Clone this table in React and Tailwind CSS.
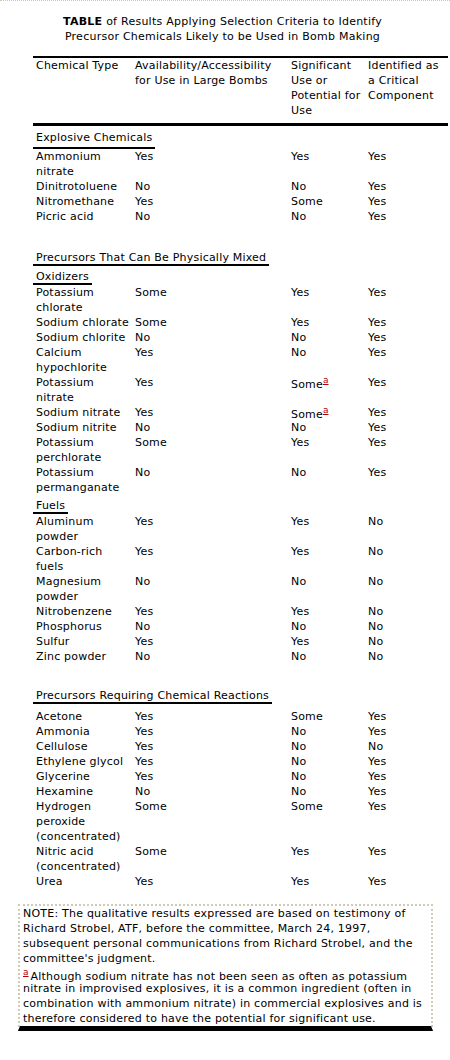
import React from "react";

const explosive = [
  [["Ammonium", "nitrate"], "Yes", "Yes", "Yes"],
  [["Dinitrotoluene"], "No", "No", "Yes"],
  [["Nitromethane"], "Yes", "Some", "Yes"],
  [["Picric acid"], "No", "No", "Yes"],
];

const oxidizers = [
  [["Potassium", "chlorate"], "Some", "Yes", "Yes"],
  [["Sodium chlorate"], "Some", "Yes", "Yes"],
  [["Sodium chlorite"], "No", "No", "Yes"],
  [["Calcium", "hypochlorite"], "Yes", "No", "Yes"],
  [["Potassium", "nitrate"], "Yes", "Some*", "Yes"],
  [["Sodium nitrate"], "Yes", "Some*", "Yes"],
  [["Sodium nitrite"], "No", "No", "Yes"],
  [["Potassium", "perchlorate"], "Some", "Yes", "Yes"],
  [["Potassium", "permanganate"], "No", "No", "Yes"],
];

const fuels = [
  [["Aluminum", "powder"], "Yes", "Yes", "No"],
  [["Carbon-rich", "fuels"], "Yes", "Yes", "No"],
  [["Magnesium", "powder"], "No", "No", "No"],
  [["Nitrobenzene"], "Yes", "Yes", "No"],
  [["Phosphorus"], "No", "No", "No"],
  [["Sulfur"], "Yes", "Yes", "No"],
  [["Zinc powder"], "No", "No", "No"],
];

const reactions = [
  [["Acetone"], "Yes", "Some", "Yes"],
  [["Ammonia"], "Yes", "No", "Yes"],
  [["Cellulose"], "Yes", "No", "No"],
  [["Ethylene glycol"], "Yes", "No", "Yes"],
  [["Glycerine"], "Yes", "No", "Yes"],
  [["Hexamine"], "No", "No", "Yes"],
  [["Hydrogen", "peroxide", "(concentrated)"], "Some", "Some", "Yes"],
  [["Nitric acid", "(concentrated)"], "Some", "Yes", "Yes"],
  [["Urea"], "Yes", "Yes", "Yes"],
];

const grid = "grid grid-cols-[99px_156px_77px_83px]";

function Sup() {
  return (
    <span className="relative -top-[5px] text-[9px] leading-none tracking-normal text-[#b00000] underline">
      a
    </span>
  );
}

function Cell({ value }) {
  if (value === "Some*") {
    return (
      <div className="pl-[3px]">
        <span className="relative top-[2px] whitespace-nowrap">
          Some
          <Sup />
        </span>
      </div>
    );
  }
  return <div className="pl-[3px] whitespace-nowrap">{value}</div>;
}

function Rows({ rows }) {
  return (
    <div>
      {rows.map((r, i) => (
        <div key={i} className={grid}>
          <div className="pl-[3px] whitespace-nowrap">
            {r[0].map((l, j) => (
              <div key={j}>{l}</div>
            ))}
          </div>
          <Cell value={r[1]} />
          <Cell value={r[2]} />
          <Cell value={r[3]} />
        </div>
      ))}
    </div>
  );
}

function SubHead({ children, className = "" }) {
  return (
    <div
      className={`w-fit pl-[3px] pr-[3px] leading-[12px] border-b-2 border-black whitespace-nowrap ${className}`}
    >
      {children}
    </div>
  );
}

export default function App() {
  return (
    <div
      className="w-[450px] h-[1060px] bg-white text-black text-[11px] leading-[15px] border-t border-dotted border-[#cfc8a8] overflow-hidden"
      style={{ fontFamily: '"DejaVu Sans", Verdana, sans-serif' }}
    >
      <div className="pt-[13px] pr-[5px] text-center tracking-[0.25px]">
        <div>
          <span className="font-bold">TABLE</span> of Results Applying Selection Criteria to Identify
        </div>
        <div>Precursor Chemicals Likely to be Used in Bomb Making</div>
      </div>

      <div className="ml-[33px] w-[415px] tracking-[0.2px]">
        <div className="mt-[12px] border-t-2 border-black" />
        <div className={`${grid} pb-[5px] border-b-[3px] border-black`}>
          <div className="pl-[3px] whitespace-nowrap">Chemical Type</div>
          <div className="pl-[3px] whitespace-nowrap">
            <div>Availability/Accessibility</div>
            <div>for Use in Large Bombs</div>
          </div>
          <div className="pl-[3px] whitespace-nowrap">
            <div>Significant</div>
            <div>Use or</div>
            <div>Potential for</div>
            <div>Use</div>
          </div>
          <div className="pl-[3px] whitespace-nowrap">
            <div>Identified as</div>
            <div>a Critical</div>
            <div>Component</div>
          </div>
        </div>

        <div className="mt-[4px] w-fit pl-[3px] pr-[3px] pb-[2px] border-b-2 border-black whitespace-nowrap">
          Explosive Chemicals
        </div>
        <Rows rows={explosive} />

        <SubHead className="mt-[28px]">Precursors That Can Be Physically Mixed</SubHead>
        <SubHead className="mt-[5px]">Oxidizers</SubHead>
        <Rows rows={oxidizers} />

        <SubHead className="mt-[5px]">Fuels</SubHead>
        <Rows rows={fuels} />

        <SubHead className="mt-[26px]">Precursors Requiring Chemical Reactions</SubHead>
        <div className="mt-[5px]">
          <Rows rows={reactions} />
        </div>
      </div>

      <div className="mt-[15px] ml-[18px] w-[415px] border-t-2 border-l-2 border-r-2 border-dotted border-[#d2cbb3] border-b-[5px] [border-bottom-style:solid] border-b-black bg-white">
        <div className="pl-[3px] whitespace-nowrap tracking-[0.22px]">
          <div>
            NOTE: The qualitative results expressed are based on testimony of
            <br />
            Richard Strobel, ATF, before the committee, March 24, 1997,
            <br />
            subsequent personal communications from Richard Strobel, and the
            <br />
            committee's judgment.
          </div>
          <div className="mt-[3px]">
            <Sup />
            <span className="ml-[2px]">Although sodium nitrate has not been seen as often as potassium</span>
          </div>
          <div className="-mt-[3px]">
            nitrate in improvised explosives, it is a common ingredient (often in
            <br />
            combination with ammonium nitrate) in commercial explosives and is
            <br />
            therefore considered to have the potential for significant use.
          </div>
        </div>
      </div>
    </div>
  );
}
